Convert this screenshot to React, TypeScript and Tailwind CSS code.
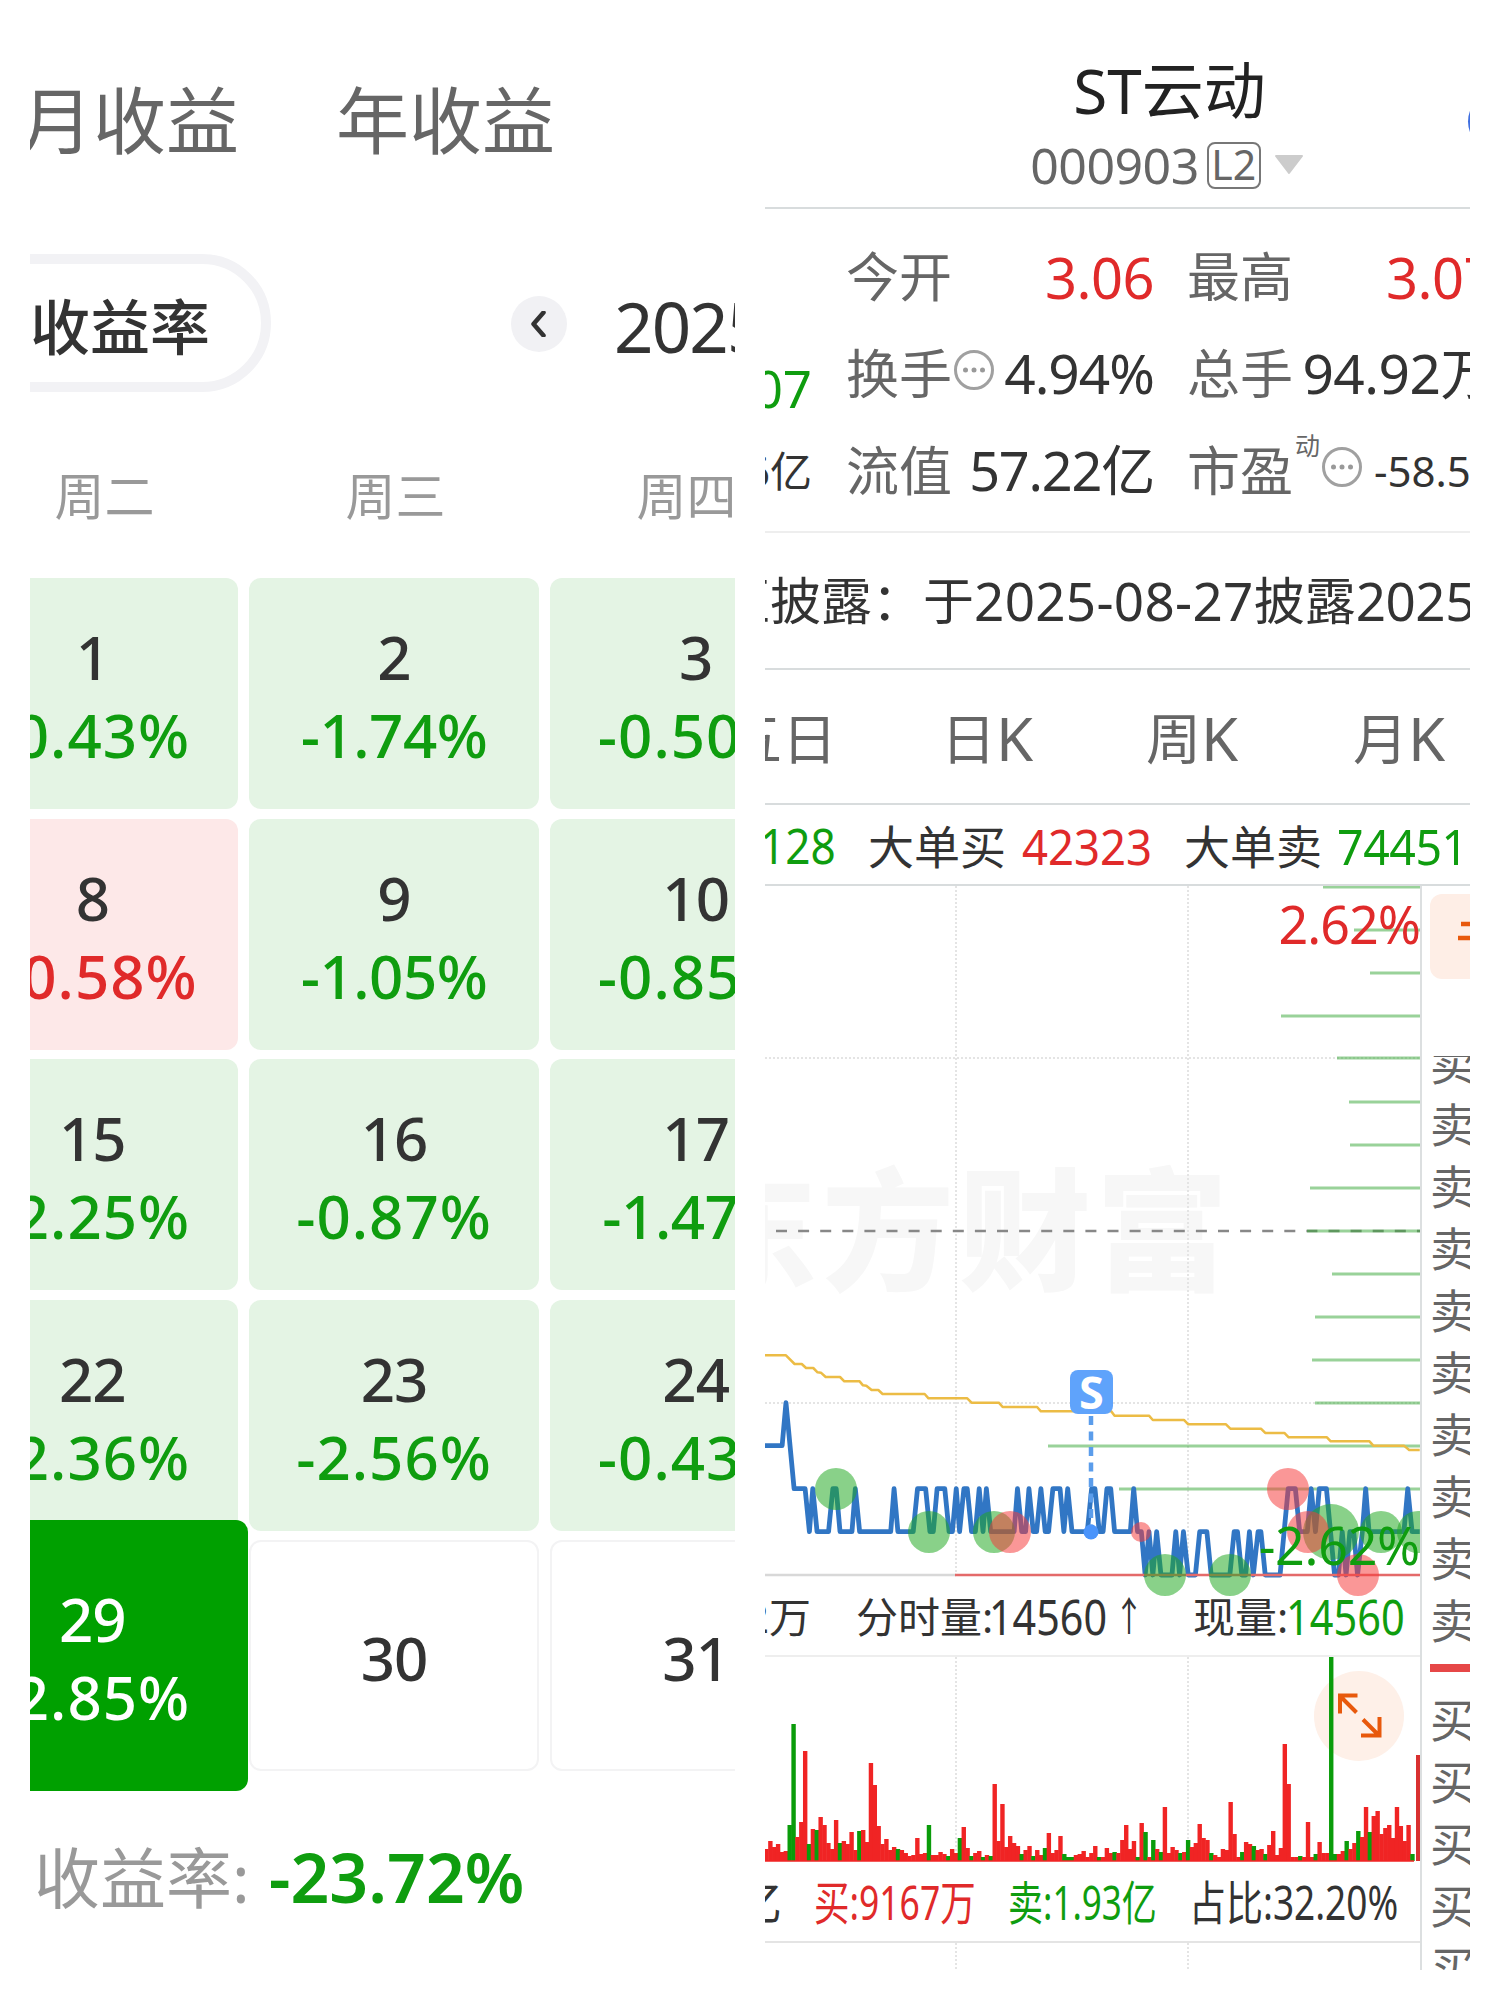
import type { ReactNode } from 'react'
import clsx from 'clsx'

type Day = {
  day: string
  rate?: string
  tone?: 'loss' | 'gain' | 'today'
}

const DAYS: Day[] = [
  { day: '1', rate: '-0.43%', tone: 'loss' },
  { day: '2', rate: '-1.74%', tone: 'loss' },
  { day: '3', rate: '-0.50%', tone: 'loss' },
  { day: '8', rate: '+0.58%', tone: 'gain' },
  { day: '9', rate: '-1.05%', tone: 'loss' },
  { day: '10', rate: '-0.85%', tone: 'loss' },
  { day: '15', rate: '-2.25%', tone: 'loss' },
  { day: '16', rate: '-0.87%', tone: 'loss' },
  { day: '17', rate: '-1.47%', tone: 'loss' },
  { day: '22', rate: '-2.36%', tone: 'loss' },
  { day: '23', rate: '-2.56%', tone: 'loss' },
  { day: '24', rate: '-0.43%', tone: 'loss' },
  { day: '29', rate: '-2.85%', tone: 'today' },
  { day: '30' },
  { day: '31' }
]

// bar heights per minute, negative values are drawn green
const VOLUMES = [
  12, 20, 14, 17, 9, 10, -36, -137, 24, 39, 110, -17, 32, -31, 44, 36, 18, 12, 41, -18,
  20, 17, 29, 11, -30, 31, 19, 98, 76, 35, 17, 22, 11, 14, -12, 11, 8, 5, 6, 23,
  7, 8, -36, 6, 6, 9, 7, -5, 12, 8, -23, 34, 13, -5, 8, 10, -4, 6, -5, 77,
  20, 57, 14, 25, 18, 15, -7, 11, 15, -5, 11, 6, -13, 28, 8, 11, 25, -7, -4, -4,
  6, 7, 10, 4, 8, 15, -4, 4, 13, 8, -9, 8, 21, 36, 12, 20, -4, 38, -29, 4,
  -21, 12, -9, 54, 8, 14, 11, -8, 9, -21, 14, 18, 37, 23, 21, -8, 6, 4, 12, 11,
  59, 27, 4, -9, 19, 17, -15, 11, 12, -7, 16, 30, 6, 13, 117, 77, 4, 4, -5, 4,
  39, 4, -7, 19, 8, 8, -204, -7, 7, 10, -20, 12, 18, -30, 24, 54, -29, 45, 50, 27,
  33, 36, 23, 54, 35, 20, 36, -7
]

// [y, left end] of the price distribution lines, they all end at x=655
const LEVELS = [
  [1, 558], [44, 589], [87, 605], [130, 516], [172, 572], [216, 584], [259, 585], [302, 545],
  [345, 542], [388, 567], [431, 550], [474, 547], [517, 550], [560, 283], [603, 354]
]

const AVERAGE =
  '31,76 75,76 93,102 108,102 117,114 132,114 141,127 148,128 158,141 188,141 197,154 229,154 236,166 243,167 254,180 268,180 277,192 365,192 373,205 454,205 463,218 520,218 528,231 600,231 608,244 755,244 762,257 834,257 842,270 907,270 916,283 995,283 1004,296 1068,296 1077,309 1117,309 1126,322 1206,322 1214,334 1295,334 1303,347 1367,347 1378,360 1400,360'

const PRICE =
  '31,347 67,347 75,218 92,476 115,476 124,605 131,476 140,605 164,605 173,476 180,476 188,605 213,605 220,476 229,605 294,605 301,476 309,605 341,605 350,476 367,476 376,605 383,605 391,476 407,476 416,605 423,605 431,476 438,605 447,476 454,476 463,605 471,605 479,476 487,605 494,476 503,605 552,605 559,476 568,605 576,605 583,476 592,605 599,605 608,476 617,605 624,605 633,476 648,476 656,605 664,476 673,605 705,605 714,476 721,476 730,605 738,605 746,476 754,476 762,605 795,605 802,476 810,605 818,605 826,735 834,605 842,735 850,605 859,735 882,735 890,605 898,735 906,605 916,735 931,735 940,605 955,605 964,735 1003,735 1012,605 1019,605 1028,735 1036,735 1044,605 1052,735 1062,605 1068,605 1077,735 1108,735 1125,476 1140,476 1149,605 1165,605 1173,476 1182,605 1190,476 1205,476 1222,735 1230,735 1238,605 1246,735 1254,605 1262,605 1270,735 1280,605 1287,476 1294,605 1367,605 1375,476 1384,605 1400,605'

// [x, y, radius]
const GREEN_DOTS = [
  [71, 603, 21], [164, 646, 21], [229, 646, 21], [400, 689, 21], [465, 689, 21], [566, 646, 28], [616, 646, 21], [653, 646, 21]
]
const RED_DOTS = [
  [245, 646, 21], [376, 646, 10], [523, 603, 21], [543, 646, 21], [593, 689, 21]
]

function DayCell({ day, rate, tone }: Day) {
  return (
    <div
      className={clsx(
        'flex flex-col items-center justify-center rounded-xl pt-[5px] text-[60px] leading-[78px] font-medium text-[#333]',
        tone === 'loss' && 'bg-[#e4f4e4]',
        tone === 'gain' && 'bg-[#fde8e8]',
        tone === 'today' && 'z-10 -mx-2.5 -my-5 bg-[#00a000] text-white',
        !tone && 'border-2 border-[#f3f3f4]'
      )}
    >
      <span className="tracking-[-1px]">{day}</span>
      {rate && (
        <span
          className={clsx(
            tone === 'loss' && 'text-[#0f9d0f]',
            tone === 'gain' && 'text-[#e02a2a]',
            rate.includes('1') ? 'tracking-[-0.5px]' : 'tracking-[1px]'
          )}
        >
          {rate}
        </span>
      )}
    </div>
  )
}

function ProfitCalendar() {
  return (
    <section className="h-[1970px] w-[705px] overflow-hidden">
      <div className="-ml-[10px] flex h-[240px] items-center gap-[97px] text-[73px] whitespace-nowrap text-[#666]">
        <span>月收益</span>
        <span>年收益</span>
      </div>

      <div className="flex h-[166px] items-start pt-[14px]">
        <div className="-ml-[71px] flex h-[138px] w-[312px] shrink-0 items-center rounded-full border-[10px] border-[#f2f2f5] pt-[7px] pl-[61px] text-[60px] font-medium whitespace-nowrap text-[#333]">
          收益率
        </div>
        <div className="mt-[42px] ml-[240px] flex size-[56px] shrink-0 items-center justify-center rounded-full bg-[#f1f1f4]">
          <svg width="16" height="26" viewBox="0 0 16 26" fill="none" stroke="#333" strokeWidth="4.5">
            <path d="M12.500 1.500 2.500 13l10 11.500" strokeLinecap="round" strokeLinejoin="round" />
          </svg>
        </div>
        <span className="mt-[22px] ml-[47px] text-[69px] leading-[100px] tracking-[-1.800px] text-[#333]">2025</span>
      </div>

      <div className="-ml-[71px] flex h-[172px] items-center pt-[8px] text-[50px] text-[#999]">
        <span className="w-[291px] shrink-0 text-center">周二</span>
        <span className="w-[291px] shrink-0 text-center">周三</span>
        <span className="w-[291px] shrink-0 text-center">周四</span>
      </div>

      <div className="-ml-[83px] grid w-[894px] auto-rows-[231px] grid-cols-3 gap-x-[11px] gap-y-[9.6px]">
        {DAYS.map((d) => (
          <DayCell key={d.day} {...d} />
        ))}
      </div>

      <div className="mt-[56px] flex h-[100px] items-center pl-[4px] whitespace-nowrap">
        <span className="text-[66px] text-[#999]">收益率:</span>
        <span className="ml-[19px] text-[68px] font-semibold text-[#0f9d0f]">-23.72%</span>
      </div>
    </section>
  )
}

function MoreIcon() {
  return (
    <svg width="42" height="42" viewBox="0 0 42 42" fill="none" className="-mt-[7px] ml-px shrink-0">
      <circle cx="21" cy="21" r="18.500" stroke="#a0a0a0" strokeWidth="3" />
      <g fill="#999">
        <circle cx="12.500" cy="21" r="2.500" />
        <circle cx="21" cy="21" r="2.500" />
        <circle cx="29.500" cy="21" r="2.500" />
      </g>
    </svg>
  )
}

function Quote({ label, children }: { label: ReactNode; children: ReactNode }) {
  return (
    <div className="flex h-[97px] w-[308px] items-center justify-between whitespace-nowrap">
      <span className="flex items-center text-[53px] text-[#666]">{label}</span>
      {children}
    </div>
  )
}

function StockHeader() {
  return (
    <header className="relative flex h-[209px] flex-col items-center border-b-2 border-[#d8dcdd] pt-[50px] pr-[2px]">
      <h1 className="ml-[106px] h-[80px] text-[62px] leading-[80px] text-[#222]">ST云动</h1>
      <div className="ml-[101px] flex h-[70px] items-center text-[#666]">
        <span className="text-[50px] tracking-[-0.500px]">000903</span>
        <span className="ml-[8px] flex h-[47px] w-[54px] items-center justify-center rounded-lg border-2 border-[#777] text-[41px]">
          L2
        </span>
        <svg width="30" height="20" viewBox="0 0 30 20" className="ml-[13px]">
          <path d="M2 1h26L15 18z" fill="#ccc" stroke="#ccc" strokeWidth="2" strokeLinejoin="round" />
        </svg>
      </div>
      <div className="absolute top-[92px] -right-[57px] size-[59px] rounded-full bg-[#3f6fe0]" />
    </header>
  )
}

function QuoteBoard() {
  return (
    <div className="flex h-[324px] border-b-2 border-[#eee] pt-[19px]">
      <div className="flex w-[47px] shrink-0 flex-col whitespace-nowrap">
        <div className="h-[97px]" />
        <div className="flex h-[97px] items-center justify-end pt-[30px] text-[51px] text-[#0f9d0f]">.07</div>
        <div className="flex h-[97px] items-center justify-end text-[42px] text-[#333]">6亿</div>
      </div>
      <div className="ml-[34px] shrink-0">
        <Quote label="今开">
          <span className="text-[56px] tracking-[-0.500px] text-[#e02a2a]">3.06</span>
        </Quote>
        <Quote label={<>换手<MoreIcon /></>}>
          <span className="text-[55px] tracking-[-1px] text-[#333]">4.94%</span>
        </Quote>
        <Quote label="流值">
          <span className="text-[54px] tracking-[-1.200px] text-[#333]">57.22亿</span>
        </Quote>
      </div>
      <div className="ml-[33px] shrink-0">
        <Quote label="最高">
          <span className="text-[56px] tracking-[-0.500px] text-[#e02a2a]">3.07</span>
        </Quote>
        <Quote label="总手">
          <span className="text-[55px] tracking-[-0.500px] text-[#333]">94.92万</span>
        </Quote>
        <Quote
          label={
            <>
              市盈<sup className="top-0 mb-[52px] ml-[2px] text-[25px]">动</sup>
              <MoreIcon />
            </>
          }
        >
          <span className="w-[121px] text-[42px] text-[#333]">-58.5</span>
        </Quote>
      </div>
    </div>
  )
}

function PriceChart() {
  return (
    <div className="relative h-[710px]">
      <span className="absolute top-[258px] -left-[80px] text-[132px] leading-[170px] font-black tracking-[5px] whitespace-nowrap text-[#f7f7f7]">
        东方财富
      </span>
      <svg width="655" height="710" viewBox="0 0 655 710" fill="none" className="absolute top-0 left-0">
        <g stroke="#e4e4e4" strokeWidth="2" strokeDasharray="2 2">
          <path d="M191 0V689M423 0V689" />
          <path d="M0 172H655M0 517H655" />
        </g>
        <path d="M11 345H655" stroke="#888" strokeWidth="2.500" strokeDasharray="11 11.100" />
        {LEVELS.map(([y, x]) => (
          <path key={y} d={`M${x} ${y}H655`} stroke="#33a533" strokeOpacity="0.5" strokeWidth="3" />
        ))}
        <path d="M0 689H191" stroke="#d8d8d8" strokeWidth="2.500" />
        <g transform="translate(-14.900 444) scale(.4783 .3333)" strokeLinejoin="round">
          <polyline points={AVERAGE} stroke="#ecbc45" strokeWidth="2.500" vectorEffect="non-scaling-stroke" />
          <polyline points={PRICE} stroke="#3176c4" strokeWidth="4.800" vectorEffect="non-scaling-stroke" />
        </g>
        <path d="M190 689H655" stroke="#e46a6a" strokeWidth="2.500" />
        <g fill="#20a820" fillOpacity="0.53">
          {GREEN_DOTS.map(([x, y, r]) => (
            <circle key={x} cx={x} cy={y} r={r} />
          ))}
        </g>
        <g fill="#f53b3b" fillOpacity="0.53">
          {RED_DOTS.map(([x, y, r]) => (
            <circle key={x} cx={x} cy={y} r={r} />
          ))}
        </g>
        <path d="M326 530V640" stroke="#5b9deb" strokeWidth="4.500" strokeDasharray="9 6.500" />
        <circle cx="326" cy="646" r="7.500" fill="#4a94fb" />
      </svg>
      <span className="absolute top-[484px] left-[305px] flex h-[44px] w-[43px] items-center justify-center rounded-lg bg-[#5fa3fb] pb-px text-[45px] leading-none font-bold text-white">
        S
      </span>
      <span className="absolute top-[3px] right-0 text-[52px] leading-[70px] tracking-[-1px] text-[#e02a2a]">2.62%</span>
      <span className="absolute top-[624px] right-0 text-[52px] leading-[70px] tracking-[-0.300px] text-[#0f9d0f]">-2.62%</span>
    </div>
  )
}

function VolumeChart() {
  return (
    <svg width="655" height="206" viewBox="0 0 655 206" fill="none" className="block">
      <path d="M191 0V204M423 0V204" stroke="#e4e4e4" strokeWidth="2" strokeDasharray="2 2" />
      <circle cx="594" cy="59" r="45" fill="#fef0e8" />
      {VOLUMES.map((v, i) => (
        <rect
          key={i}
          x={-0.7 + i * 3.868}
          y={204 - Math.abs(v)}
          width="4.400"
          height={Math.abs(v)}
          fill={v < 0 ? '#0a9c0a' : '#f02424'}
        />
      ))}
      <rect x="651" y="98" width="4.500" height="106" fill="#d93030" />
      <path d="M0 204H649" stroke="#f02424" strokeWidth="1.500" />
      <g stroke="#e8590c" strokeWidth="4">
        <path d="M592.500 38.500h-17.500v18M575.500 39.500l16 16" />
        <path d="M596 78.500h18.500V60M598 62.500l16 16" />
      </g>
    </svg>
  )
}

function OrderBook() {
  return (
    <aside className="flex w-[50px] shrink-0 flex-col overflow-hidden border-l-2 border-[#dcdfe0] pl-[8px]">
      <div className="mt-[8px] flex h-[85px] w-[80px] shrink-0 items-center rounded-xl bg-[#feeee6] pl-[28px]">
        <svg width="40" height="24" viewBox="0 0 40 24" stroke="#e8590c" strokeWidth="4.500" className="-mt-[14px] shrink-0">
          <path d="M3 6h30M0 20h36" />
        </svg>
      </div>
      <div className="mt-[77px] flex h-[595px] shrink-0 flex-col justify-end overflow-hidden text-[46px] leading-[62px] text-[#666]">
        {Array.from({ length: 10 }, (_, i) => (
          <span key={i} className="w-[60px] shrink-0">卖</span>
        ))}
      </div>
      <div className="mt-[13px] h-2 shrink-0 bg-[#e64747]" />
      <div className="mt-[16px] flex flex-col text-[46px] leading-[62px] text-[#666]">
        {Array.from({ length: 5 }, (_, i) => (
          <span key={i} className="w-[60px] shrink-0">买</span>
        ))}
      </div>
    </aside>
  )
}

function StockPanel() {
  return (
    <section className="flex h-[1970px] w-[705px] flex-col overflow-hidden">
      <StockHeader />
      <QuoteBoard />

      <div className="-ml-[46px] flex h-[137px] shrink-0 items-center border-b-2 border-[#d8dcdd] text-[51px] whitespace-nowrap text-[#333]">
        <span>汇披露：于</span>
        <span className="text-[53px] tracking-[0.300px]">2025-08-27</span>
        <span>披露</span>
        <span className="text-[53px] tracking-[-0.500px]">2025</span>
      </div>

      <nav className="-ml-[38px] flex h-[135px] shrink-0 items-center border-b-2 border-[#d8dcdd] pt-[3px] text-[55px] whitespace-nowrap text-[#666]">
        <span className="w-[214px]">五日</span>
        <span className="flex w-[205px] items-center">日<span className="text-[60px]">K</span></span>
        <span className="flex w-[207px] items-center">周<span className="text-[60px]">K</span></span>
        <span className="flex items-center">月<span className="text-[60px]">K</span></span>
      </nav>

      <div className="flex h-[81px] shrink-0 items-center border-b-2 border-[#d8dcdd] pt-[3px] text-[46px] whitespace-nowrap text-[#333] [&>span]:shrink-0">
        <span className="-ml-[5px] w-[108px] origin-left scale-x-90 text-[49px] text-[#0f9d0f]">128</span>
        <span className="w-[154px]">大单买</span>
        <span className="w-[162px] origin-left scale-x-[0.91] text-[50px] text-[#e02a2a]">42323</span>
        <span className="w-[153px]">大单卖</span>
        <span className="origin-left scale-x-[0.93] text-[50px] tracking-[-0.500px] text-[#0f9d0f]">74451</span>
      </div>

      <div className="flex min-h-0 flex-1">
        <div className="w-[655px] shrink-0">
          <PriceChart />
          <div className="-mt-[20px] flex h-[81px] items-center border-b-2 border-[#eee] pt-px text-[42px] whitespace-nowrap text-[#333] [&>span]:shrink-0">
            <span className="-ml-[20px] w-[111px]">2万</span>
            <span className="w-[133px]">分时量:</span>
            <span className="w-[125px] origin-left scale-x-[0.825] text-[50px]">14560</span>
            <span className="w-[79px] origin-left scale-x-75 text-[40px]">↑</span>
            <span className="w-[93px]">现量:</span>
            <span className="origin-left scale-x-[0.83] text-[50px] text-[#0f9d0f]">14560</span>
          </div>
          <VolumeChart />
          <div className="flex h-[80px] items-center border-b-2 border-[#e4e4e4] pt-px text-[47px] whitespace-nowrap text-[#333] [&>span]:shrink-0">
            <span className="-ml-[30px] w-[79px]">亿</span>
            <span className="w-[194px] origin-left scale-x-[0.755] text-[#e02a2a]">买:9167万</span>
            <span className="w-[181px] origin-left scale-x-[0.745] text-[#0f9d0f]">卖:1.93亿</span>
            <span className="origin-left scale-x-[0.787]">占比:32.20%</span>
          </div>
          <svg width="655" height="28" viewBox="0 0 655 28" className="block">
            <path d="M191 0V28M423 0V28" stroke="#e4e4e4" strokeWidth="2" strokeDasharray="2 2" />
          </svg>
        </div>
        <OrderBook />
      </div>
    </section>
  )
}

export default function App() {
  return (
    <main className="flex h-[2000px] w-[1500px] gap-[30px] bg-white px-[30px] font-['Noto_Sans','Noto_Sans_CJK_SC',sans-serif]">
      <ProfitCalendar />
      <StockPanel />
    </main>
  )
}
